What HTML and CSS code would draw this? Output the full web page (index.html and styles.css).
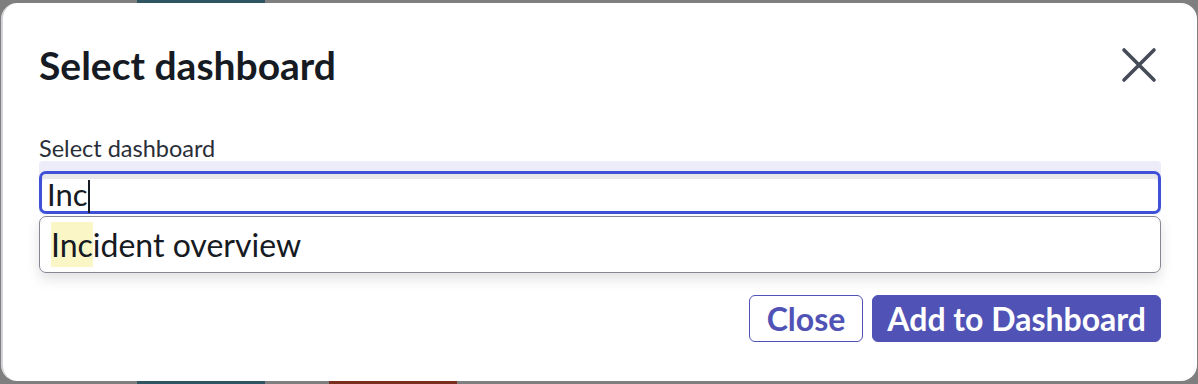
FILE: index.html
```html
<!DOCTYPE html>
<html lang="en">
<head>
  <meta charset="UTF-8">
  <title>Select dashboard</title>
  <link rel="stylesheet" href="styles.css">
</head>
<body>
  <div class="modal">
    <div class="modal-header">
      <h2>Select dashboard</h2>
      <button class="icon-close" aria-label="Close">
        <svg width="36" height="36" viewBox="0 0 36 36">
          <path d="M3 3 L33 33 M33 3 L3 33" stroke="#464b58" stroke-width="3.6" stroke-linecap="round" fill="none"/>
        </svg>
      </button>
    </div>

    <div class="field">
      <label for="dash">Select dashboard</label>
      <div class="input-wrap">
        <div class="input" id="dash">Inc<span class="caret"></span></div>
      </div>
      <ul class="options">
        <li><mark>Inc</mark>ident overview</li>
      </ul>
    </div>

    <div class="actions">
      <button class="btn btn-outline">Close</button>
      <button class="btn btn-primary">Add to Dashboard</button>
    </div>
  </div>
</body>
</html>
```

FILE: styles.css
```css
body {
  margin: 0;
  padding: 3px 1px 3px 1px;
  font-family: 'Lato', 'Noto Sans', sans-serif;
  color: #161a22;
  background:
    linear-gradient(to right, transparent 137px, #2f5563 137px, #2f5563 265px, transparent 265px) top / 100% 3px no-repeat,
    linear-gradient(to right, transparent 137px, #2f5563 137px, #2f5563 265px, transparent 265px, transparent 329px, #7a2e1e 329px, #7a2e1e 457px, transparent 457px) bottom / 100% 3px no-repeat,
    #7f7f7f;
  height: 378px;
}
.modal {
  background: #fff;
  border-radius: 16px;
  border-left: 2px solid #d4d4d8;
  height: 378px;
  box-sizing: border-box;
  padding: 37px 36px 0 36px;
}
.modal-header {
  display: flex;
  justify-content: space-between;
  align-items: center;
}
h2 {
  margin: 0;
  font-size: 39px;
  font-weight: 700;
  line-height: 50px;
  color: #161a22;
}
.icon-close {
  background: none;
  border: none;
  padding: 0;
  margin-right: 4px;
  width: 36px;
  height: 36px;
  cursor: pointer;
}
.field {
  margin-top: 45px;
}
label {
  display: block;
  font-size: 23.5px;
  line-height: 26px;
  color: #2a2e38;
}
.input-wrap {
  background: #ecedf9;
  padding-top: 10px;
  border-radius: 4px;
}
.input {
  border: 3px solid #3e51d8;
  border-radius: 7px;
  height: 37px;
  background: #fff;
  box-shadow: inset 0 5px 0 #e8e8ea;
  font-size: 31px;
  line-height: 40px;
  padding-left: 5px;
  color: #161a22;
}
.caret {
  display: inline-block;
  width: 2px;
  height: 33px;
  background: #161a22;
  vertical-align: -7px;
}
.options {
  list-style: none;
  margin: 2px 0 0 0;
  padding: 0;
  border: 1.5px solid #858894;
  border-radius: 7px;
  box-shadow: 0 6px 14px rgba(0, 0, 0, 0.12);
}
.options li {
  font-size: 32px;
  line-height: 55px;
  padding-left: 11px;
  color: #161a22;
}
mark {
  background: #faf6c6;
  color: inherit;
  padding: 3px 0;
}
.actions {
  display: flex;
  justify-content: flex-end;
  gap: 9px;
  margin-top: 22px;
}
.btn {
  font-family: 'Lato', sans-serif;
  font-size: 32px;
  font-weight: 700;
  height: 47px;
  border-radius: 6px;
  padding: 0 14px;
  cursor: pointer;
}
.btn-outline {
  background: #fff;
  border: 1.5px solid #5053b5;
  color: #5053b5;
  padding: 0 17px;
}
.btn-primary {
  background: #5053b5;
  border: 1.5px solid #5053b5;
  color: #fff;
}
```
